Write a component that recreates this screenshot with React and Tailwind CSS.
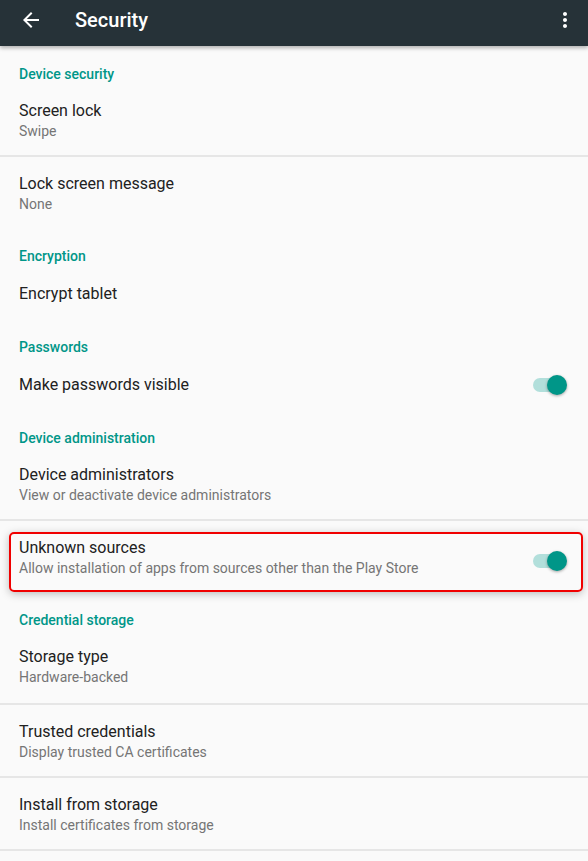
import React from 'react';

const font = { fontFamily: 'Roboto, "Liberation Sans", sans-serif' };

const Category = ({ title }) => (
  <div className="h-[38px] pt-[18px] pl-[19px] text-[14px] leading-[20px] font-medium text-[#009688]">
    {title}
  </div>
);

const Divider = () => <div className="h-[2px] bg-[#e6e6e6]" />;

const Toggle = () => (
  <div className="relative w-[34px] h-5 shrink-0">
    <div className="absolute left-0 top-[3px] w-[28px] h-[14px] rounded-full bg-[#b2dfdb]" />
    <div className="absolute right-0 top-0 w-5 h-5 rounded-full bg-[#009688] shadow-[0_1px_3px_rgba(0,0,0,0.35)]" />
  </div>
);

const Item = ({ title, summary, toggle, highlight, tall }) => (
  <div
    className={`relative flex pl-[19px] pr-[21px] ${
      summary
        ? `${tall ? 'h-[73px]' : 'h-[71px]'} items-start pt-[17px]`
        : 'h-[53px] items-center pt-[2px]'
    }`}
  >
    <div className="flex-1">
      <div className="text-[16px] leading-[20px] text-[#212121]">{title}</div>
      {summary && (
        <div className="text-[14px] leading-[20px] text-[#757575]">{summary}</div>
      )}
    </div>
    {toggle && (
      <div className={summary ? 'mt-[13px]' : ''}>
        <Toggle />
      </div>
    )}
    {highlight && (
      <div className="absolute left-[9px] right-[5px] top-[11px] bottom-0 rounded-[5px] border-2 border-[#f00000] shadow-[0_2px_8px_rgba(0,0,0,0.25)] pointer-events-none" />
    )}
  </div>
);

export default function App() {
  return (
    <div className="w-[588px] h-[861px] bg-[#fafafa] overflow-hidden" style={font}>
      {/* toolbar */}
      <div className="relative z-10 h-[46px] bg-[#263238] flex items-center pb-[6px] shadow-[0_2px_4px_rgba(0,0,0,0.3)]">
        <svg width="24" height="24" viewBox="0 0 24 24" className="ml-[19px]">
          <path d="M20 11H7.83l5.59-5.59L12 4l-8 8 8 8 1.41-1.41L7.83 13H20v-2z" fill="#fff" />
        </svg>
        <div className="ml-[32px] text-[20px] leading-[24px] font-medium text-white">Security</div>
        <div className="flex-1" />
        <svg width="24" height="24" viewBox="0 0 24 24" className="mr-[11px]">
          <path
            d="M12 8c1.1 0 2-.9 2-2s-.9-2-2-2-2 .9-2 2 .9 2 2 2zm0 2c-1.1 0-2 .9-2 2s.9 2 2 2 2-.9 2-2-.9-2-2-2zm0 6c-1.1 0-2 .9-2 2s.9 2 2 2 2-.9 2-2-.9-2-2-2z"
            fill="#fff"
          />
        </svg>
      </div>

      <Category title="Device security" />
      <Item title="Screen lock" summary="Swipe" />
      <Divider />
      <Item title="Lock screen message" summary="None" />

      <Category title="Encryption" />
      <Item title="Encrypt tablet" />

      <Category title="Passwords" />
      <Item title="Make passwords visible" toggle />

      <Category title="Device administration" />
      <Item title="Device administrators" summary="View or deactivate device administrators" />
      <Divider />
      <Item
        title="Unknown sources"
        summary="Allow installation of apps from sources other than the Play Store"
        toggle
        highlight
      />

      <Category title="Credential storage" />
      <Item title="Storage type" summary="Hardware-backed" tall />
      <Divider />
      <Item title="Trusted credentials" summary="Display trusted CA certificates" />
      <Divider />
      <Item title="Install from storage" summary="Install certificates from storage" />
      <Divider />
    </div>
  );
}
